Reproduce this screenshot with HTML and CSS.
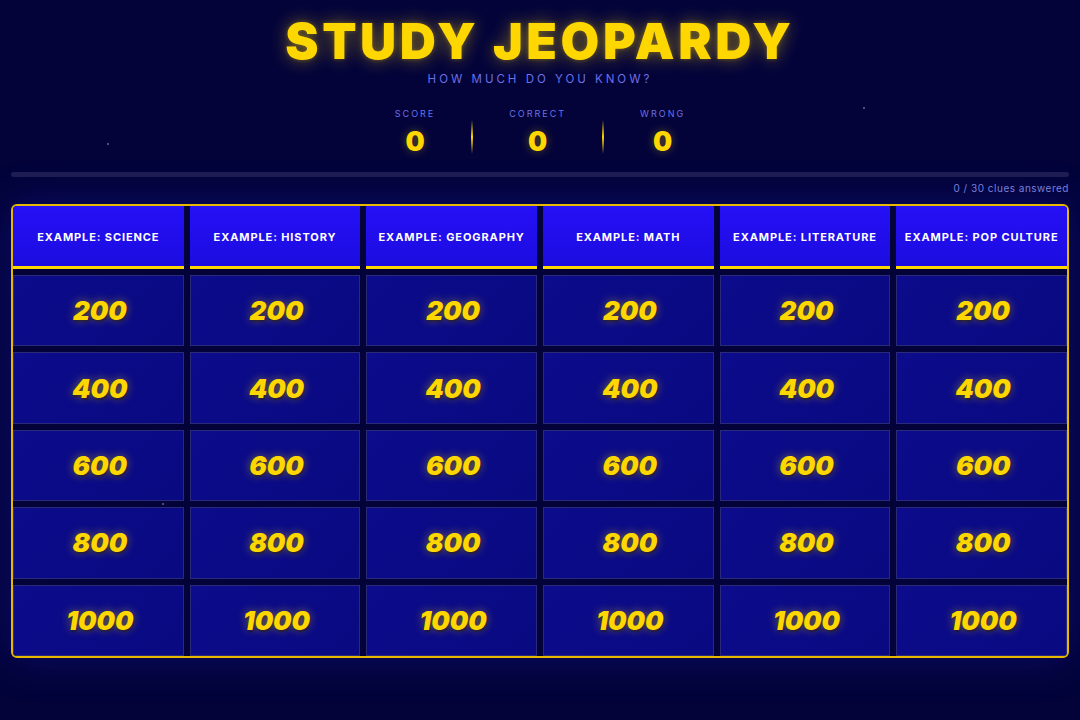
FILE: index.html
```html
<!DOCTYPE html>
<html lang="en">
<head>
<meta charset="utf-8">
<title>Study Jeopardy</title>
<link rel="stylesheet" href="styles.css">
</head>
<body>
<span class="star s1"></span><span class="star s2"></span><span class="star s3"></span>
<header class="top">
  <h1 class="title">STUDY JEOPARDY</h1>
  <p class="subtitle">HOW MUCH DO YOU KNOW?</p>
  <div class="stats">
    <div class="stat"><span class="stat-label">SCORE</span><span class="stat-value">0</span></div>
    <div class="divider"></div>
    <div class="stat"><span class="stat-label">CORRECT</span><span class="stat-value">0</span></div>
    <div class="divider"></div>
    <div class="stat"><span class="stat-label">WRONG</span><span class="stat-value">0</span></div>
  </div>
</header>
<div class="progress"><div class="progress-fill" style="width:0%"></div></div>
<div class="progress-text">0 / 30 clues answered</div>
<main class="board">
  <div class="cat">EXAMPLE: SCIENCE</div>
  <div class="cat">EXAMPLE: HISTORY</div>
  <div class="cat">EXAMPLE: GEOGRAPHY</div>
  <div class="cat">EXAMPLE: MATH</div>
  <div class="cat">EXAMPLE: LITERATURE</div>
  <div class="cat">EXAMPLE: POP CULTURE</div>
  <div class="cell">200</div><div class="cell">200</div><div class="cell">200</div><div class="cell">200</div><div class="cell">200</div><div class="cell">200</div>
  <div class="cell">400</div><div class="cell">400</div><div class="cell">400</div><div class="cell">400</div><div class="cell">400</div><div class="cell">400</div>
  <div class="cell">600</div><div class="cell">600</div><div class="cell">600</div><div class="cell">600</div><div class="cell">600</div><div class="cell">600</div>
  <div class="cell">800</div><div class="cell">800</div><div class="cell">800</div><div class="cell">800</div><div class="cell">800</div><div class="cell">800</div>
  <div class="cell">1000</div><div class="cell">1000</div><div class="cell">1000</div><div class="cell">1000</div><div class="cell">1000</div><div class="cell">1000</div>
</main>
</body>
</html>
```
FILE: styles.css
```css
* { box-sizing: border-box; }
html, body { margin: 0; padding: 0; }
body {
  width: 1080px;
  height: 720px;
  overflow: hidden;
  background: #03033a;
  font-family: "Inter", "Noto Sans", sans-serif;
  padding: 0 11px;
  position: relative;
}
.star {
  position: absolute;
  width: 2px; height: 2px;
  background: #4a4a8a;
}
.s1 { left: 107px; top: 143px; }
.s2 { left: 863px; top: 107px; }
.s3 { left: 162px; top: 503px; }
.top {
  display: flex;
  flex-direction: column;
  align-items: center;
  padding-top: 14px;
}
.title {
  margin: 0;
  font-size: 50px;
  line-height: 54px;
  font-weight: 900;
  letter-spacing: 3.6px;
  color: #ffd700;
  text-shadow: 0 0 18px rgba(255, 215, 0, 0.45), 0 0 4px rgba(255, 200, 0, 0.3);
}
.subtitle {
  margin: 4px 0 0;
  font-size: 11.5px;
  letter-spacing: 3px;
  color: #6b70e6;
  font-weight: 400;
}
.stats {
  display: flex;
  align-items: center;
  gap: 36px;
  margin-top: 22px;
}
.stat {
  display: flex;
  flex-direction: column;
  align-items: center;
}
.stat-label {
  font-size: 9px;
  letter-spacing: 2px;
  color: #6b70e6;
  line-height: 12px;
}
.stat-value {
  margin-top: 7px;
  font-size: 27px;
  line-height: 30px;
  font-weight: 900;
  color: #ffd700;
  text-shadow: 0 0 10px rgba(255, 215, 0, 0.35);
}
.divider {
  width: 2px;
  height: 34px;
  margin-top: 8px;
  background: linear-gradient(to bottom, rgba(255,215,0,0), #ffd700 50%, rgba(255,215,0,0));
}
.progress {
  margin-top: 15px;
  height: 5px;
  border-radius: 3px;
  background: #1e1e52;
}
.progress-fill { height: 100%; background: #ffd700; border-radius: 3px; }
.progress-text {
  text-align: right;
  font-size: 10px;
  color: #7a80d8;
  margin-top: 5px;
  line-height: 12px;
  letter-spacing: 0.5px;
}
.board {
  margin-top: 10px;
  display: grid;
  grid-template-columns: repeat(6, 1fr);
  grid-template-rows: 63px repeat(5, 71.4px);
  gap: 6px;
  border: 2px solid #e6b800;
  border-radius: 6px;
  background: #03033a;
  box-shadow: 0 0 40px rgba(30, 30, 190, 0.35);
  overflow: hidden;
}
.cat {
  display: flex;
  align-items: center;
  justify-content: center;
  background: linear-gradient(to bottom, #2610f6, #1c0ce0);
  border-bottom: 3px solid #ffd700;
  color: #ffffff;
  font-size: 11px;
  font-weight: 700;
  letter-spacing: 0.9px;
  padding-top: 2px;
}
.cell {
  display: flex;
  align-items: center;
  justify-content: center;
  background: linear-gradient(135deg, #0c0c8c, #090981);
  border: 1px solid #2a2a78;
  color: #ffd700;
  font-size: 26px;
  font-weight: 900;
  font-style: italic;
  padding-left: 3px;
  text-shadow: 0 0 10px rgba(255, 215, 0, 0.45), 1px 2px 2px rgba(0, 0, 0, 0.5);
}
```
